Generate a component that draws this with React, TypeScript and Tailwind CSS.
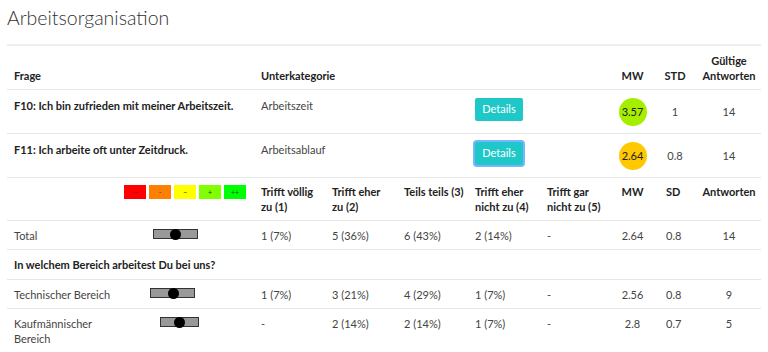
import React from "react";

type Question = {
  text: string;
  sub: string;
  mw: string;
  std: string;
  count: number;
  circle: string;
  focused?: boolean;
};

const questions: Question[] = [
  {
    text: "F10: Ich bin zufrieden mit meiner Arbeitszeit.",
    sub: "Arbeitszeit",
    mw: "3.57",
    std: "1",
    count: 14,
    circle: "bg-[#a6ee00]",
  },
  {
    text: "F11: Ich arbeite oft unter Zeitdruck.",
    sub: "Arbeitsablauf",
    mw: "2.64",
    std: "0.8",
    count: 14,
    circle: "bg-[#ffc800]",
    focused: true,
  },
];

const legend = [
  { label: "--", cls: "bg-[#ff0000]" },
  { label: "-", cls: "bg-[#ff8000]" },
  { label: "~", cls: "bg-[#ffff00]" },
  { label: "+", cls: "bg-[#80ff00]" },
  { label: "++", cls: "bg-[#00ff00]" },
];

type Row = {
  label: string;
  slider: string;
  dot: string;
  vals: string[];
  mw: string;
  sd: string;
  n: number;
};

const total: Row = {
  label: "Total",
  slider: "ml-[29px] w-[45px]",
  dot: "ml-[16px]",
  vals: ["1 (7%)", "5 (36%)", "6 (43%)", "2 (14%)", "-"],
  mw: "2.64",
  sd: "0.8",
  n: 14,
};

const groups: Row[] = [
  {
    label: "Technischer Bereich",
    slider: "ml-[26px] w-[45px]",
    dot: "ml-[17px]",
    vals: ["1 (7%)", "3 (21%)", "4 (29%)", "1 (7%)", "-"],
    mw: "2.56",
    sd: "0.8",
    n: 9,
  },
  {
    label: "Kaufmännischer Bereich",
    slider: "ml-[36px] w-[39px]",
    dot: "ml-[13px]",
    vals: ["-", "2 (14%)", "2 (14%)", "1 (7%)", "-"],
    mw: "2.8",
    sd: "0.7",
    n: 5,
  },
];

const Slider = ({ slider, dot }: { slider: string; dot: string }) => (
  <div className={`${slider} h-[10px] bg-[#999] border border-[#333] flex items-center`}>
    <div className={`${dot} w-[11px] h-[11px] rounded-full bg-black`} />
  </div>
);

const DataRow = ({ row }: { row: Row }) => (
  <tr className="border-b border-[#e6e6e6] align-top">
    <td className="px-[7px] pt-[7px] pb-[6px]">{row.label}</td>
    <td className="pt-[8px]">
      <Slider slider={row.slider} dot={row.dot} />
    </td>
    {row.vals.map((v, i) => (
      <td key={i} className="px-[7px] pt-[7px] pb-[6px]">
        {v}
      </td>
    ))}
    <td className="pt-[7px] pb-[6px] text-center">{row.mw}</td>
    <td className="pl-[13px] pt-[7px] pb-[6px]">{row.sd}</td>
    <td className="pt-[7px] pb-[6px] text-center">{row.n}</td>
  </tr>
);

export default function App() {
  return (
    <div className="w-[768px] h-[352px] overflow-hidden bg-white px-[7px] text-[11px] text-[#444] font-['Lato',sans-serif]">
      <h2 className="pt-[5px] text-[19.5px] leading-[26px] font-light text-[#333]">
        Arbeitsorganisation
      </h2>

      <table className="mt-[13px] w-[754px] table-fixed border-collapse border-t-2 border-[#eee]">
        <colgroup>
          <col className="w-[247px]" />
          <col className="w-[214px]" />
          <col className="w-[144px]" />
          <col className="w-[41px]" />
          <col className="w-[44px]" />
          <col className="w-[64px]" />
        </colgroup>
        <thead>
          <tr className="border-b border-[#e6e6e6] font-bold text-[#222] leading-[15px] align-bottom">
            <th className="px-[7px] pt-[7px] pb-[6px] text-left">Frage</th>
            <th className="px-[7px] pt-[7px] pb-[6px] text-left">Unterkategorie</th>
            <th />
            <th className="pt-[7px] pb-[6px] text-center">MW</th>
            <th className="pt-[7px] pb-[6px] text-center">STD</th>
            <th className="pt-[7px] pb-[6px] text-center">
              Gültige
              <br />
              Antworten
            </th>
          </tr>
        </thead>
        <tbody>
          {questions.map((q) => (
            <tr key={q.text} className="border-b border-[#e6e6e6] align-top">
              <td className="px-[7px] pt-2 font-bold text-[#222] leading-[15px]">{q.text}</td>
              <td className="px-[7px] pt-2 leading-[15px]">{q.sub}</td>
              <td className="px-[7px] pt-2">
                <button
                  className={`w-[48px] h-[23px] rounded-[2px] bg-[#1fc8c8] text-white text-[11px] ${
                    q.focused ? "ring-2 ring-[#79b4ff]" : ""
                  }`}
                >
                  Details
                </button>
              </td>
              <td className="pt-2 pb-[7px]">
                <div
                  className={`mx-auto w-[28px] h-[28px] rounded-full ${q.circle} flex items-center justify-center text-[#222]`}
                >
                  {q.mw}
                </div>
              </td>
              <td className="pt-2 text-center leading-[28px]">{q.std}</td>
              <td className="pt-2 text-center leading-[28px]">{q.count}</td>
            </tr>
          ))}
        </tbody>
      </table>

      <table className="w-[754px] table-fixed border-collapse">
        <colgroup>
          <col className="w-[117px]" />
          <col className="w-[130px]" />
          <col className="w-[71px]" />
          <col className="w-[72px]" />
          <col className="w-[71px]" />
          <col className="w-[72px]" />
          <col className="w-[72px]" />
          <col className="w-[41px]" />
          <col className="w-[44px]" />
          <col className="w-[64px]" />
        </colgroup>
        <thead>
          <tr className="border-b border-[#e6e6e6] font-bold text-[#222] leading-[15px] align-top text-left">
            <th />
            <th className="pt-[7px]">
              <div className="flex gap-[3px]">
                {legend.map((l) => (
                  <div
                    key={l.label}
                    className={`${l.cls} w-[22px] h-[14px] flex items-center justify-center text-[7px] font-normal text-[#333]`}
                  >
                    {l.label}
                  </div>
                ))}
              </div>
            </th>
            <th className="px-[7px] py-[6px]">Trifft völlig zu (1)</th>
            <th className="px-[7px] py-[6px]">Trifft eher zu (2)</th>
            <th className="px-[7px] py-[6px] whitespace-nowrap">Teils teils (3)</th>
            <th className="px-[7px] py-[6px]">Trifft eher nicht zu (4)</th>
            <th className="px-[7px] py-[6px]">Trifft gar nicht zu (5)</th>
            <th className="py-[6px] text-center">MW</th>
            <th className="pl-[13px] py-[6px]">SD</th>
            <th className="py-[6px] text-center">Antworten</th>
          </tr>
        </thead>
        <tbody className="leading-[15px]">
          <DataRow row={total} />
          <tr className="border-b border-[#e6e6e6]">
            <td colSpan={10} className="px-[7px] pt-[7px] pb-[7px] font-bold text-[#222]">
              In welchem Bereich arbeitest Du bei uns?
            </td>
          </tr>
          {groups.map((g) => (
            <DataRow key={g.label} row={g} />
          ))}
        </tbody>
      </table>
    </div>
  );
}
